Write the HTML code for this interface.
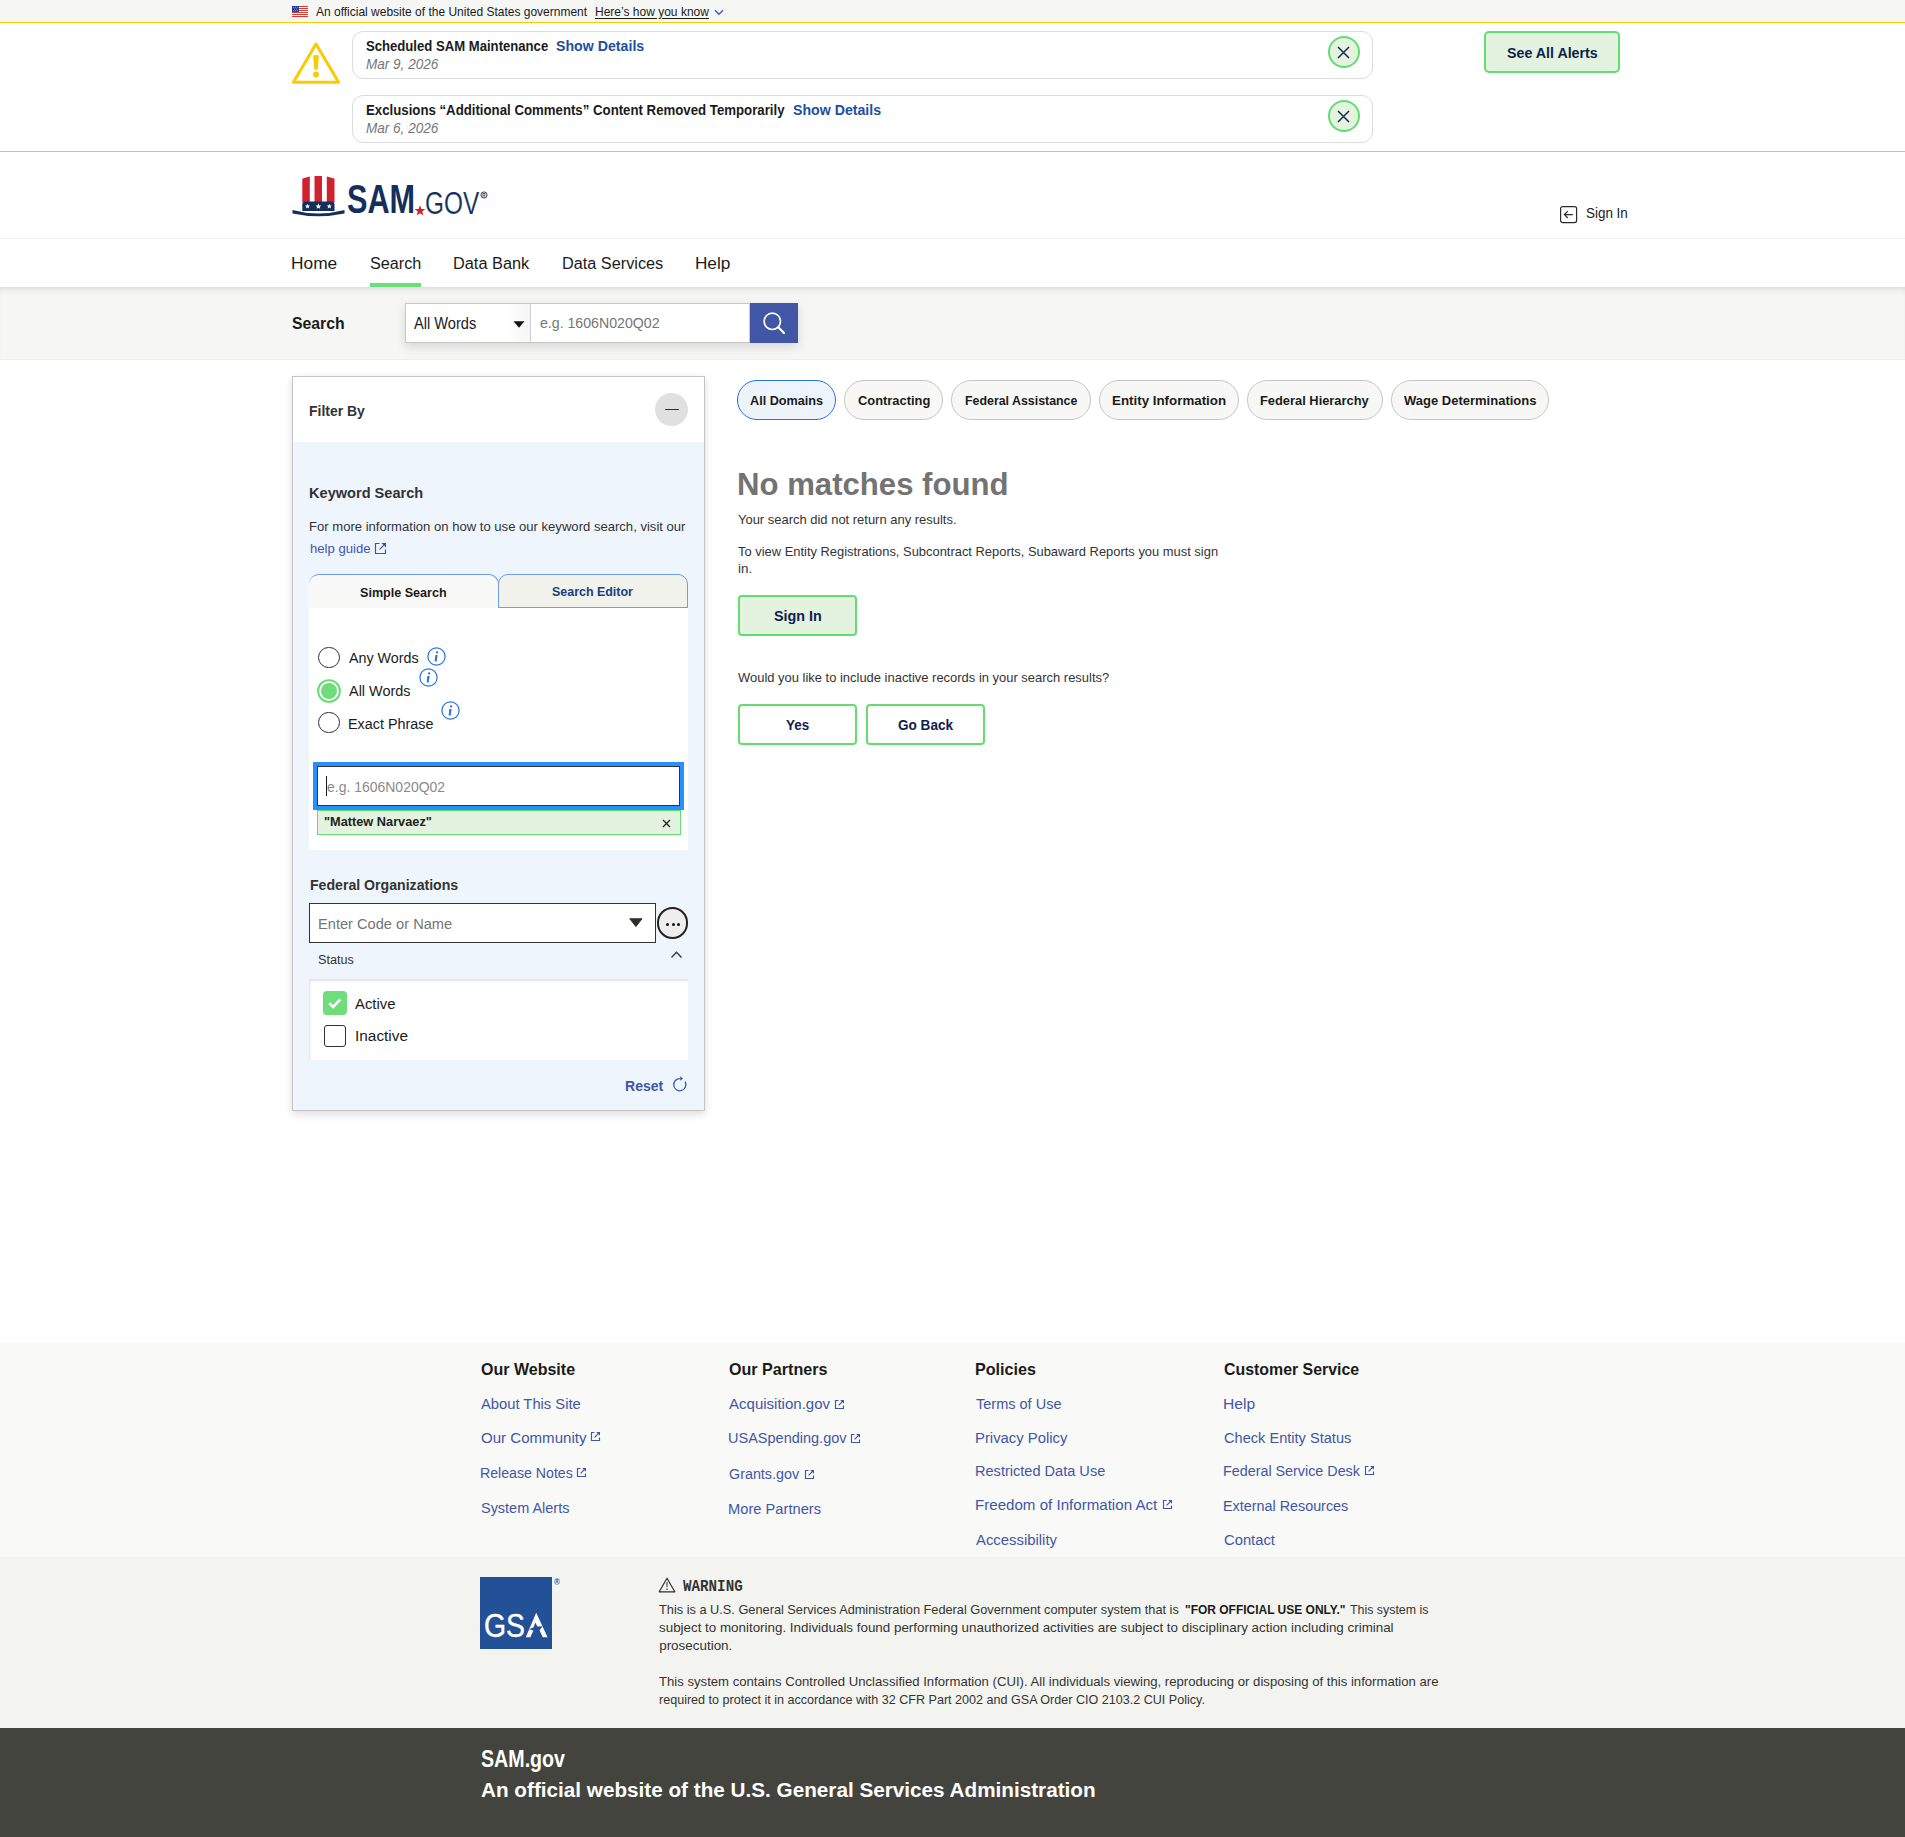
<!DOCTYPE html>
<html><head><meta charset="utf-8"><title>SAM.gov Search</title>
<style>
html,body{margin:0;padding:0;}
body{width:1905px;height:1837px;position:relative;overflow:hidden;background:#fff;font-family:'Liberation Sans', sans-serif;}
</style></head><body>
<div style="position:absolute;left:0px;top:0px;width:1905px;height:22px;background:#f6f6f4"></div><div style="position:absolute;left:0px;top:22px;width:1905px;height:1px;background:#f9cb00"></div><svg style="position:absolute;left:292px;top:6px" width="16" height="11" viewBox="0 0 16 11">
<rect width="16" height="11" fill="#fff"/>
<g fill="#d83933"><rect y="0" width="16" height="1"/><rect y="2" width="16" height="1"/><rect y="4" width="16" height="1"/><rect y="6" width="16" height="1"/><rect y="8" width="16" height="1"/><rect y="10" width="16" height="1"/></g>
<rect width="7" height="6" fill="#1e3a9f"/>
<g fill="#fff"><circle cx="1.5" cy="1.3" r=".45"/><circle cx="3.5" cy="1.3" r=".45"/><circle cx="5.5" cy="1.3" r=".45"/><circle cx="2.5" cy="3" r=".45"/><circle cx="4.5" cy="3" r=".45"/><circle cx="1.5" cy="4.7" r=".45"/><circle cx="3.5" cy="4.7" r=".45"/><circle cx="5.5" cy="4.7" r=".45"/></g>
</svg><svg style="position:absolute;left:714px;top:9px" width="10" height="7" viewBox="0 0 10 7"><path d="M1 1.2 L5 5.2 L9 1.2" fill="none" stroke="#2f5fc9" stroke-width="1.4"/></svg><div style="position:absolute;left:0px;top:151px;width:1905px;height:1px;background:#f9cb00"></div><svg style="position:absolute;left:291px;top:41px" width="50" height="44" viewBox="0 0 50 44">
<path d="M25 3.0 L47.6 41.2 L2.4 41.2 Z" fill="none" stroke="#f9cb00" stroke-width="3.0" stroke-linejoin="round"/>
<path d="M22.1 14.6 Q25 13.2 27.9 14.6 L26.7 28.4 Q25 29.2 23.3 28.4 Z" fill="#f9cb00"/>
<circle cx="25" cy="33.5" r="3" fill="#f9cb00"/>
</svg><div style="position:absolute;left:352px;top:31px;width:1019px;height:46px;border:1px solid #dcdcdc;border-radius:11px;background:#fff"></div><div style="position:absolute;left:1327.5px;top:35.5px;width:28px;height:28px;border:2px solid #63dd70;border-radius:50%;background:#e3f3df"></div><svg style="position:absolute;left:1336px;top:44.5px" width="15" height="15" viewBox="0 0 15 15"><path d="M2 2 L13 13 M13 2 L2 13" stroke="#1a2b52" stroke-width="1.5"/></svg><div style="position:absolute;left:352px;top:95px;width:1019px;height:46px;border:1px solid #dcdcdc;border-radius:11px;background:#fff"></div><div style="position:absolute;left:1327.5px;top:99.5px;width:28px;height:28px;border:2px solid #63dd70;border-radius:50%;background:#e3f3df"></div><svg style="position:absolute;left:1336px;top:108.5px" width="15" height="15" viewBox="0 0 15 15"><path d="M2 2 L13 13 M13 2 L2 13" stroke="#1a2b52" stroke-width="1.5"/></svg><div style="position:absolute;left:1484px;top:31px;width:132px;height:38px;border:2px solid #63dd70;border-radius:5px;background:#e3f3df"></div><svg style="position:absolute;left:292px;top:175px" width="197" height="42" viewBox="0 0 197 42">
<path d="M10.3 3.8 Q14 2.3 17.8 1.6 L17.8 27.5 L10.3 27.5 Z" fill="#d0222e"/>
<path d="M22.5 1 L30 1 L30 27.5 L22.5 27.5 Z" fill="#d0222e"/>
<path d="M34.8 1.6 Q38.6 2.3 42.5 3.8 L42.5 27.5 L34.8 27.5 Z" fill="#d0222e"/>
<path d="M10.3 29.5 Q10.3 26.5 14 26.5 L38.8 26.5 Q42.5 26.5 42.5 29.5 L42.5 36 L10.3 36 Z" fill="#14305a"/>
<g fill="#fff"><path d="M15.5 28.8 l.75 1.6 1.75.2 -1.3 1.15 .35 1.7 -1.55 -.85 -1.55 .85 .35 -1.7 -1.3 -1.15 1.75 -.2z"/>
<path d="M26.4 28.6 l.85 1.8 1.95.22 -1.45 1.3 .4 1.9 -1.75 -.95 -1.75 .95 .4 -1.9 -1.45 -1.3 1.95 -.22z"/>
<path d="M37.3 28.8 l.75 1.6 1.75.2 -1.3 1.15 .35 1.7 -1.55 -.85 -1.55 .85 .35 -1.7 -1.3 -1.15 1.75 -.2z"/></g>
<path d="M0.5 35 Q26 42 52.5 35 L52.5 38.5 Q26 44 0.5 38.5 Z" fill="#14305a"/>
</svg><svg style="position:absolute;left:414px;top:205px" width="12" height="11" viewBox="0 0 12 11"><path d="M6 0.3 L7.4 4 L11.4 4.1 L8.2 6.6 L9.4 10.6 L6 8.3 L2.6 10.6 L3.8 6.6 L0.6 4.1 L4.6 4 Z" fill="#d0222e"/></svg><svg style="position:absolute;left:479.5px;top:191px" width="8" height="8" viewBox="0 0 8 8"><circle cx="4" cy="4" r="3.1" fill="none" stroke="#14305a" stroke-width=".9"/><text x="4" y="5.6" font-size="4.6" text-anchor="middle" fill="#14305a" font-family="Liberation Sans" font-weight="700">R</text></svg><svg style="position:absolute;left:1559px;top:205px" width="20" height="19" viewBox="0 0 20 19"><rect x="1.6" y="1.6" width="16" height="16" rx="2" fill="none" stroke="#2b2b2b" stroke-width="1.2"/><path d="M13.8 9.6 L5.5 9.6 M8.8 6.2 L5.4 9.6 L8.8 13" fill="none" stroke="#2b2b2b" stroke-width="1.2"/></svg><div style="position:absolute;left:0px;top:238px;width:1905px;height:1px;background:#efefea"></div><div style="position:absolute;left:370px;top:283px;width:51px;height:4px;background:#6bde77"></div><div style="position:absolute;left:0px;top:287px;width:1905px;height:72px;background:#f6f6f4;box-shadow:inset 0 6px 8px -6px rgba(0,0,0,.18)"></div><div style="position:absolute;left:0px;top:359px;width:1905px;height:1px;background:#efefea"></div><div style="position:absolute;left:405px;top:303px;width:393px;height:40px;box-shadow:0 4px 10px rgba(0,0,0,.13)"></div><div style="position:absolute;left:405px;top:303px;width:125px;height:38px;border:1px solid #c8c8c8;background:#fff"></div><div style="position:absolute;left:505px;top:304px;width:25px;height:38px;background:linear-gradient(90deg,rgba(0,0,0,0),rgba(0,0,0,.035))"></div><svg style="position:absolute;left:513px;top:321px" width="12" height="7" viewBox="0 0 12 7"><path d="M0.5 0.3 L11.5 0.3 L6 6.8 Z" fill="#111"/></svg><div style="position:absolute;left:531px;top:303px;width:218px;height:38px;border:1px solid #c8c8c8;border-left:none;background:#fff"></div><div style="position:absolute;left:530px;top:304px;width:1px;height:38px;background:#d0d0d0"></div><div style="position:absolute;left:750px;top:303px;width:48px;height:40px;background:#4157a6"></div><svg style="position:absolute;left:760px;top:309px" width="28" height="28" viewBox="0 0 28 28"><circle cx="12.3" cy="12.3" r="8.2" fill="none" stroke="#fff" stroke-width="1.7"/><path d="M18.3 18.3 L24 24" stroke="#fff" stroke-width="2.2" stroke-linecap="round"/></svg><div style="position:absolute;left:292px;top:376px;width:411px;height:733px;border:1px solid #c4c4c4;background:#eef5fc;box-shadow:0 3px 8px rgba(0,0,0,.14)"></div><div style="position:absolute;left:293px;top:377px;width:411px;height:65px;background:#fff"></div><div style="position:absolute;left:655px;top:393px;width:33px;height:33px;border-radius:50%;background:#e0e0e0"></div><div style="position:absolute;left:665px;top:408.7px;width:14px;height:1.7px;background:#0e3570;border-radius:1px"></div><svg style="position:absolute;left:374px;top:542px" width="14" height="13" viewBox="0 0 14 13"><path d="M5.5 1.5 L1.5 1.5 L1.5 11.5 L11.5 11.5 L11.5 7.5" fill="none" stroke="#3f51b5" stroke-width="1.2"/><path d="M5.6 7.4 L11.2 1.8" fill="none" stroke="#3f51b5" stroke-width="1.2"/><path d="M7.4 1 L12 1 L12 5.6 Z" fill="#3f51b5"/></svg><div style="position:absolute;left:309px;top:574px;width:189px;height:34px;border-top:1px solid #6f9de9;border-right:1px solid #6f9de9;border-radius:10px 10px 0 0;background:#f8f8f6"></div><div style="position:absolute;left:498px;top:574px;width:188px;height:33px;border:1px solid #6f9de9;border-radius:10px 10px 0 0;background:#f1f2ec"></div><div style="position:absolute;left:309px;top:608px;width:379px;height:242px;background:#fff"></div><div style="position:absolute;left:309.5px;top:606px;width:188px;height:2px;background:#f8f8f6"></div><div style="position:absolute;left:498px;top:607px;width:190px;height:1px;background:#6f9de9"></div><div style="position:absolute;left:318px;top:646.8px;width:19.5px;height:19.5px;border:1.4px solid #2d2d2d;border-radius:50%;background:#fff"></div><svg style="position:absolute;left:426.5px;top:646.5px" width="19" height="19" viewBox="0 0 19 19"><circle cx="9.5" cy="9.5" r="8.6" fill="none" stroke="#2672de" stroke-width="1.2"/><path d="M8.3 8 L10.6 8 L9.6 14.4 L7.7 14.4 Z" fill="#2672de"/><circle cx="10.1" cy="5.4" r="1.15" fill="#2672de"/></svg><svg style="position:absolute;left:317px;top:678.8px" width="24" height="24" viewBox="0 0 24 24"><circle cx="12" cy="12" r="10.9" fill="#fff" stroke="#63dd70" stroke-width="1.9"/><circle cx="12" cy="12" r="8" fill="#70dd7b"/></svg><svg style="position:absolute;left:418.5px;top:667.5px" width="19" height="19" viewBox="0 0 19 19"><circle cx="9.5" cy="9.5" r="8.6" fill="none" stroke="#2672de" stroke-width="1.2"/><path d="M8.3 8 L10.6 8 L9.6 14.4 L7.7 14.4 Z" fill="#2672de"/><circle cx="10.1" cy="5.4" r="1.15" fill="#2672de"/></svg><div style="position:absolute;left:318px;top:711.7px;width:19.5px;height:19.5px;border:1.4px solid #2d2d2d;border-radius:50%;background:#fff"></div><svg style="position:absolute;left:440.5px;top:700.5px" width="19" height="19" viewBox="0 0 19 19"><circle cx="9.5" cy="9.5" r="8.6" fill="none" stroke="#2672de" stroke-width="1.2"/><path d="M8.3 8 L10.6 8 L9.6 14.4 L7.7 14.4 Z" fill="#2672de"/><circle cx="10.1" cy="5.4" r="1.15" fill="#2672de"/></svg><div style="position:absolute;left:313px;top:762px;width:371px;height:48px;background:#2491ff"></div><div style="position:absolute;left:317px;top:766px;width:361px;height:38px;border:1px solid #333;background:#fff"></div><div style="position:absolute;left:325.6px;top:776px;width:1.3px;height:20px;background:#1b1b1b"></div><div style="position:absolute;left:317px;top:810px;width:361.5px;height:22.5px;border:1px solid #63dd70;background:#e3f3df"></div><svg style="position:absolute;left:662px;top:818.5px" width="9" height="9" viewBox="0 0 9 9"><path d="M1 1 L8 8 M8 1 L1 8" stroke="#222" stroke-width="1.3"/></svg><div style="position:absolute;left:309px;top:903px;width:345px;height:38px;border:1.3px solid #333;background:#fff"></div><svg style="position:absolute;left:629px;top:918px" width="14" height="10" viewBox="0 0 14 10"><path d="M0.8 0.8 L13 0.8 L6.9 8.5 Z" fill="#2e2e2a" stroke="#2e2e2a" stroke-width="1" stroke-linejoin="round"/></svg><div style="position:absolute;left:656.5px;top:907px;width:27.5px;height:27.5px;border:2px solid #222;border-radius:50%;background:#eee"></div><div style="position:absolute;left:665.8px;top:922.7px;width:3.0px;height:3.0px;border-radius:50%;background:#111"></div><div style="position:absolute;left:671.6px;top:922.7px;width:3.0px;height:3.0px;border-radius:50%;background:#111"></div><div style="position:absolute;left:677.4px;top:922.7px;width:3.0px;height:3.0px;border-radius:50%;background:#111"></div><svg style="position:absolute;left:670px;top:950px" width="13" height="9" viewBox="0 0 13 9"><path d="M1.5 7.5 L6.5 2.3 L11.5 7.5" fill="none" stroke="#333" stroke-width="1.3"/></svg><div style="position:absolute;left:309px;top:979px;width:379px;height:81px;background:#fff;box-shadow:inset 1px 2px 2px rgba(0,0,0,.12)"></div><div style="position:absolute;left:323px;top:991px;width:24px;height:24px;border-radius:4px;background:#70dd7b"></div><svg style="position:absolute;left:323px;top:991px" width="24" height="24" viewBox="0 0 24 24"><path d="M6.3 12.2 L10.2 16 L17.3 8.4" fill="none" stroke="#fff" stroke-width="2.6"/></svg><div style="position:absolute;left:324px;top:1025px;width:19.5px;height:19.5px;border:1.5px solid #333;border-radius:3px;background:#fff"></div><svg style="position:absolute;left:671px;top:1075px" width="18" height="18" viewBox="0 0 18 18"><path d="M8.8 3.6 A6.1 6.1 0 1 0 14.08 6.65" fill="none" stroke="#3b58b0" stroke-width="1.3"/><path d="M9.2 1.2 L9.2 5.8 L12.1 3.5 Z" fill="#3b58b0"/></svg><div style="position:absolute;left:737px;top:380px;width:97px;height:38px;border:1px solid #2672de;border-radius:20px;background:#edf4fb"></div><div style="position:absolute;left:844px;top:380px;width:97px;height:38px;border:1px solid #c6c6c6;border-radius:20px;background:#f7f7f5"></div><div style="position:absolute;left:951px;top:380px;width:137.5px;height:38px;border:1px solid #c6c6c6;border-radius:20px;background:#f7f7f5"></div><div style="position:absolute;left:1099px;top:380px;width:137.5px;height:38px;border:1px solid #c6c6c6;border-radius:20px;background:#f7f7f5"></div><div style="position:absolute;left:1247px;top:380px;width:134px;height:38px;border:1px solid #c6c6c6;border-radius:20px;background:#f7f7f5"></div><div style="position:absolute;left:1391px;top:380px;width:155.70000000000005px;height:38px;border:1px solid #c6c6c6;border-radius:20px;background:#f7f7f5"></div><div style="position:absolute;left:737.5px;top:594.5px;width:115.5px;height:37.5px;border:2px solid #63dd70;border-radius:4px;background:#e3f3df"></div><div style="position:absolute;left:737.5px;top:703.5px;width:115.5px;height:37px;border:2px solid #63dd70;border-radius:4px;background:#fff"></div><div style="position:absolute;left:865.5px;top:703.5px;width:115.5px;height:37px;border:2px solid #63dd70;border-radius:4px;background:#fff"></div><div style="position:absolute;left:0px;top:1343px;width:1905px;height:214px;background:#f9f9f7"></div><div style="position:absolute;left:0px;top:1557px;width:1905px;height:171px;background:#f3f4ef"></div><div style="position:absolute;left:0px;top:1728px;width:1905px;height:109px;background:#44443e"></div><svg style="position:absolute;left:590px;top:1431px" width="11" height="11" viewBox="0 0 11 11"><path d="M4.5 1.5 L1.5 1.5 L1.5 9.5 L9.5 9.5 L9.5 6.5" fill="none" stroke="#3f57a6" stroke-width="1.15"/><path d="M4.6 6.4 L9.3 1.7" fill="none" stroke="#3f57a6" stroke-width="1.15"/><path d="M6.2 1 L10 1 L10 4.8 Z" fill="#3f57a6"/></svg><svg style="position:absolute;left:576px;top:1467px" width="11" height="11" viewBox="0 0 11 11"><path d="M4.5 1.5 L1.5 1.5 L1.5 9.5 L9.5 9.5 L9.5 6.5" fill="none" stroke="#3f57a6" stroke-width="1.15"/><path d="M4.6 6.4 L9.3 1.7" fill="none" stroke="#3f57a6" stroke-width="1.15"/><path d="M6.2 1 L10 1 L10 4.8 Z" fill="#3f57a6"/></svg><svg style="position:absolute;left:834px;top:1399px" width="11" height="11" viewBox="0 0 11 11"><path d="M4.5 1.5 L1.5 1.5 L1.5 9.5 L9.5 9.5 L9.5 6.5" fill="none" stroke="#3f57a6" stroke-width="1.15"/><path d="M4.6 6.4 L9.3 1.7" fill="none" stroke="#3f57a6" stroke-width="1.15"/><path d="M6.2 1 L10 1 L10 4.8 Z" fill="#3f57a6"/></svg><svg style="position:absolute;left:850px;top:1433px" width="11" height="11" viewBox="0 0 11 11"><path d="M4.5 1.5 L1.5 1.5 L1.5 9.5 L9.5 9.5 L9.5 6.5" fill="none" stroke="#3f57a6" stroke-width="1.15"/><path d="M4.6 6.4 L9.3 1.7" fill="none" stroke="#3f57a6" stroke-width="1.15"/><path d="M6.2 1 L10 1 L10 4.8 Z" fill="#3f57a6"/></svg><svg style="position:absolute;left:804px;top:1469px" width="11" height="11" viewBox="0 0 11 11"><path d="M4.5 1.5 L1.5 1.5 L1.5 9.5 L9.5 9.5 L9.5 6.5" fill="none" stroke="#3f57a6" stroke-width="1.15"/><path d="M4.6 6.4 L9.3 1.7" fill="none" stroke="#3f57a6" stroke-width="1.15"/><path d="M6.2 1 L10 1 L10 4.8 Z" fill="#3f57a6"/></svg><svg style="position:absolute;left:1162px;top:1499px" width="11" height="11" viewBox="0 0 11 11"><path d="M4.5 1.5 L1.5 1.5 L1.5 9.5 L9.5 9.5 L9.5 6.5" fill="none" stroke="#3f57a6" stroke-width="1.15"/><path d="M4.6 6.4 L9.3 1.7" fill="none" stroke="#3f57a6" stroke-width="1.15"/><path d="M6.2 1 L10 1 L10 4.8 Z" fill="#3f57a6"/></svg><svg style="position:absolute;left:1364px;top:1465px" width="11" height="11" viewBox="0 0 11 11"><path d="M4.5 1.5 L1.5 1.5 L1.5 9.5 L9.5 9.5 L9.5 6.5" fill="none" stroke="#3f57a6" stroke-width="1.15"/><path d="M4.6 6.4 L9.3 1.7" fill="none" stroke="#3f57a6" stroke-width="1.15"/><path d="M6.2 1 L10 1 L10 4.8 Z" fill="#3f57a6"/></svg><div style="position:absolute;left:480px;top:1577px;width:72px;height:72px;background:#235197"></div><svg style="position:absolute;left:525px;top:1612px" width="24" height="26" viewBox="0 0 24 26"><path d="M11.2 0.8 L22.6 25.2 L17.8 25.2 L14.6 18.4 L17.4 14.2 L12.4 14.6 L10.2 10.4 L8.6 15.2 L4.2 17.2 L8.4 18.6 L5.4 25.2 L0.8 25.2 Z" fill="#fff"/></svg><svg style="position:absolute;left:658px;top:1577px" width="18" height="16" viewBox="0 0 18 16"><path d="M9 1.2 L16.8 14.8 L1.2 14.8 Z" fill="none" stroke="#2e2e2e" stroke-width="1.2" stroke-linejoin="round"/><path d="M8.4 5.2 L9.6 5.2 L9.4 10.2 L8.6 10.2 Z" fill="#2e2e2e"/><circle cx="9" cy="12.2" r=".8" fill="#2e2e2e"/></svg>
<div style="position:absolute;left:316.20px;top:2.70px;white-space:nowrap;font:400 13.43px 'Liberation Sans', sans-serif;line-height:17px;color:#1b1b1b;transform:scaleX(0.8934);transform-origin:0 0;">An official website of the United States government</div><div style="position:absolute;left:594.81px;top:2.70px;white-space:nowrap;font:400 13.43px 'Liberation Sans', sans-serif;line-height:17px;color:#1b1b1b;transform:scaleX(0.8947);transform-origin:0 0;text-decoration:underline;text-underline-offset:1.5px;">Here’s how you know</div><div style="position:absolute;left:365.50px;top:36.80px;white-space:nowrap;font:700 14.38px 'Liberation Sans', sans-serif;line-height:18px;color:#1b1b1b;transform:scaleX(0.9124);transform-origin:0 0;">Scheduled SAM Maintenance</div><div style="position:absolute;left:556.30px;top:36.80px;white-space:nowrap;font:700 14.38px 'Liberation Sans', sans-serif;line-height:18px;color:#1d4f9f;transform:scaleX(0.9858);transform-origin:0 0;">Show Details</div><div style="position:absolute;left:366.00px;top:53.70px;white-space:nowrap;font:italic 400 15.34px 'Liberation Sans', sans-serif;line-height:19px;color:#71767a;transform:scaleX(0.8836);transform-origin:0 0;">Mar 9, 2026</div><div style="position:absolute;left:365.50px;top:100.80px;white-space:nowrap;font:700 14.38px 'Liberation Sans', sans-serif;line-height:18px;color:#1b1b1b;transform:scaleX(0.9198);transform-origin:0 0;">Exclusions “Additional Comments” Content Removed Temporarily</div><div style="position:absolute;left:792.60px;top:100.80px;white-space:nowrap;font:700 14.38px 'Liberation Sans', sans-serif;line-height:18px;color:#1d4f9f;transform:scaleX(0.9847);transform-origin:0 0;">Show Details</div><div style="position:absolute;left:366.00px;top:117.70px;white-space:nowrap;font:italic 400 15.34px 'Liberation Sans', sans-serif;line-height:19px;color:#71767a;transform:scaleX(0.8836);transform-origin:0 0;">Mar 6, 2026</div><div style="position:absolute;left:1506.80px;top:42.70px;white-space:nowrap;font:700 15.34px 'Liberation Sans', sans-serif;line-height:19px;color:#0f1f4c;transform:scaleX(0.9288);transform-origin:0 0;">See All Alerts</div><div style="position:absolute;left:347.03px;top:174.00px;white-space:nowrap;font:700 40px 'Liberation Sans', sans-serif;line-height:50px;color:#14305a;transform:scaleX(0.7667);transform-origin:0 0;">SAM</div><div style="position:absolute;left:424.84px;top:182.50px;white-space:nowrap;font:400 32px 'Liberation Sans', sans-serif;line-height:40px;color:#14305a;transform:scaleX(0.7629);transform-origin:0 0;-webkit-text-stroke:0.15px #fff">GOV</div><div style="position:absolute;left:1586.00px;top:202.60px;white-space:nowrap;font:400 15.34px 'Liberation Sans', sans-serif;line-height:19px;color:#1b1b1b;transform:scaleX(0.8751);transform-origin:0 0;">Sign In</div><div style="position:absolute;left:291.40px;top:251.80px;white-space:nowrap;font:400 17.26px 'Liberation Sans', sans-serif;line-height:22px;color:#1b1b1b;transform:scaleX(1.0040);transform-origin:0 0;">Home</div><div style="position:absolute;left:370.00px;top:251.80px;white-space:nowrap;font:400 17.26px 'Liberation Sans', sans-serif;line-height:22px;color:#1b1b1b;transform:scaleX(0.9378);transform-origin:0 0;">Search</div><div style="position:absolute;left:453.25px;top:251.80px;white-space:nowrap;font:400 17.26px 'Liberation Sans', sans-serif;line-height:22px;color:#1b1b1b;transform:scaleX(0.9459);transform-origin:0 0;">Data Bank</div><div style="position:absolute;left:562.16px;top:251.80px;white-space:nowrap;font:400 17.26px 'Liberation Sans', sans-serif;line-height:22px;color:#1b1b1b;transform:scaleX(0.9428);transform-origin:0 0;">Data Services</div><div style="position:absolute;left:694.90px;top:251.80px;white-space:nowrap;font:400 17.26px 'Liberation Sans', sans-serif;line-height:22px;color:#1b1b1b;">Help</div><div style="position:absolute;left:292.40px;top:311.70px;white-space:nowrap;font:700 17.26px 'Liberation Sans', sans-serif;line-height:22px;color:#1b1b1b;transform:scaleX(0.9158);transform-origin:0 0;">Search</div><div style="position:absolute;left:414.00px;top:313.90px;white-space:nowrap;font:400 15.82px 'Liberation Sans', sans-serif;line-height:20px;color:#1b1b1b;transform:scaleX(0.9250);transform-origin:0 0;">All Words</div><div style="position:absolute;left:540.30px;top:313.30px;white-space:nowrap;font:400 15.34px 'Liberation Sans', sans-serif;line-height:19px;color:#757575;transform:scaleX(0.9224);transform-origin:0 0;">e.g. 1606N020Q02</div><div style="position:absolute;left:308.89px;top:401.00px;white-space:nowrap;font:700 15.34px 'Liberation Sans', sans-serif;line-height:19px;color:#333;transform:scaleX(0.9111);transform-origin:0 0;">Filter By</div><div style="position:absolute;left:308.75px;top:482.60px;white-space:nowrap;font:700 15.34px 'Liberation Sans', sans-serif;line-height:19px;color:#333;transform:scaleX(0.9507);transform-origin:0 0;">Keyword Search</div><div style="position:absolute;left:308.73px;top:517.60px;white-space:nowrap;font:400 13.43px 'Liberation Sans', sans-serif;line-height:17px;color:#333;transform:scaleX(0.9742);transform-origin:0 0;">For more information on how to use our keyword search, visit our</div><div style="position:absolute;left:309.70px;top:539.70px;white-space:nowrap;font:400 13.43px 'Liberation Sans', sans-serif;line-height:17px;color:#4553b0;transform:scaleX(0.9775);transform-origin:0 0;">help guide</div><div style="position:absolute;left:360.00px;top:583.80px;white-space:nowrap;font:700 13.43px 'Liberation Sans', sans-serif;line-height:17px;color:#1b1b1b;transform:scaleX(0.9371);transform-origin:0 0;">Simple Search</div><div style="position:absolute;left:552.30px;top:582.90px;white-space:nowrap;font:700 13.43px 'Liberation Sans', sans-serif;line-height:17px;color:#173f80;transform:scaleX(0.9268);transform-origin:0 0;">Search Editor</div><div style="position:absolute;left:349.00px;top:647.70px;white-space:nowrap;font:400 15.34px 'Liberation Sans', sans-serif;line-height:19px;color:#1b1b1b;transform:scaleX(0.9331);transform-origin:0 0;">Any Words</div><div style="position:absolute;left:349.00px;top:680.60px;white-space:nowrap;font:400 15.34px 'Liberation Sans', sans-serif;line-height:19px;color:#1b1b1b;transform:scaleX(0.9415);transform-origin:0 0;">All Words</div><div style="position:absolute;left:348.06px;top:713.60px;white-space:nowrap;font:400 15.34px 'Liberation Sans', sans-serif;line-height:19px;color:#1b1b1b;transform:scaleX(0.9371);transform-origin:0 0;">Exact Phrase</div><div style="position:absolute;left:327.30px;top:776.60px;white-space:nowrap;font:400 15.34px 'Liberation Sans', sans-serif;line-height:19px;color:#8a8a8a;transform:scaleX(0.9115);transform-origin:0 0;">e.g. 1606N020Q02</div><div style="position:absolute;left:323.50px;top:814.40px;white-space:nowrap;font:700 12.47px 'Liberation Sans', sans-serif;line-height:16px;color:#222;transform:scaleX(1.0231);transform-origin:0 0;">&quot;Mattew Narvaez&quot;</div><div style="position:absolute;left:309.70px;top:875.80px;white-space:nowrap;font:700 14.38px 'Liberation Sans', sans-serif;line-height:18px;color:#333;transform:scaleX(0.9816);transform-origin:0 0;">Federal Organizations</div><div style="position:absolute;left:317.95px;top:913.80px;white-space:nowrap;font:400 15.34px 'Liberation Sans', sans-serif;line-height:19px;color:#757575;transform:scaleX(0.9543);transform-origin:0 0;">Enter Code or Name</div><div style="position:absolute;left:317.60px;top:951.70px;white-space:nowrap;font:400 12.47px 'Liberation Sans', sans-serif;line-height:16px;color:#333;transform:scaleX(1.0110);transform-origin:0 0;">Status</div><div style="position:absolute;left:355.00px;top:994.00px;white-space:nowrap;font:400 15.34px 'Liberation Sans', sans-serif;line-height:19px;color:#1b1b1b;transform:scaleX(0.9705);transform-origin:0 0;">Active</div><div style="position:absolute;left:354.50px;top:1025.80px;white-space:nowrap;font:400 15.34px 'Liberation Sans', sans-serif;line-height:19px;color:#1b1b1b;transform:scaleX(1.0039);transform-origin:0 0;">Inactive</div><div style="position:absolute;left:624.58px;top:1075.90px;white-space:nowrap;font:700 15.34px 'Liberation Sans', sans-serif;line-height:19px;color:#3f57a6;transform:scaleX(0.9153);transform-origin:0 0;">Reset</div><div style="position:absolute;left:750.30px;top:391.80px;white-space:nowrap;font:700 13.43px 'Liberation Sans', sans-serif;line-height:17px;color:#1b1b1b;transform:scaleX(0.9430);transform-origin:0 0;">All Domains</div><div style="position:absolute;left:857.70px;top:391.80px;white-space:nowrap;font:700 13.43px 'Liberation Sans', sans-serif;line-height:17px;color:#1b1b1b;transform:scaleX(0.9599);transform-origin:0 0;">Contracting</div><div style="position:absolute;left:964.60px;top:391.80px;white-space:nowrap;font:700 13.43px 'Liberation Sans', sans-serif;line-height:17px;color:#1b1b1b;transform:scaleX(0.9222);transform-origin:0 0;">Federal Assistance</div><div style="position:absolute;left:1111.80px;top:391.80px;white-space:nowrap;font:700 13.43px 'Liberation Sans', sans-serif;line-height:17px;color:#1b1b1b;transform:scaleX(0.9936);transform-origin:0 0;">Entity Information</div><div style="position:absolute;left:1260.30px;top:391.80px;white-space:nowrap;font:700 13.43px 'Liberation Sans', sans-serif;line-height:17px;color:#1b1b1b;transform:scaleX(0.9585);transform-origin:0 0;">Federal Hierarchy</div><div style="position:absolute;left:1403.60px;top:391.80px;white-space:nowrap;font:700 13.43px 'Liberation Sans', sans-serif;line-height:17px;color:#1b1b1b;transform:scaleX(0.9687);transform-origin:0 0;">Wage Determinations</div><div style="position:absolute;left:736.67px;top:466.00px;white-space:nowrap;font:700 30.69px 'Liberation Sans', sans-serif;line-height:38px;color:#737373;transform:scaleX(1.0143);transform-origin:0 0;">No matches found</div><div style="position:absolute;left:737.80px;top:510.80px;white-space:nowrap;font:400 13.43px 'Liberation Sans', sans-serif;line-height:17px;color:#333;transform:scaleX(0.9655);transform-origin:0 0;">Your search did not return any results.</div><div style="position:absolute;left:737.80px;top:542.70px;white-space:nowrap;font:400 13.43px 'Liberation Sans', sans-serif;line-height:17px;color:#333;transform:scaleX(0.9619);transform-origin:0 0;">To view Entity Registrations, Subcontract Reports, Subaward Reports you must sign</div><div style="position:absolute;left:738.00px;top:560.40px;white-space:nowrap;font:400 13.43px 'Liberation Sans', sans-serif;line-height:17px;color:#333;">in.</div><div style="position:absolute;left:773.70px;top:606.20px;white-space:nowrap;font:700 15.34px 'Liberation Sans', sans-serif;line-height:19px;color:#102050;transform:scaleX(0.9364);transform-origin:0 0;">Sign In</div><div style="position:absolute;left:737.80px;top:668.80px;white-space:nowrap;font:400 13.43px 'Liberation Sans', sans-serif;line-height:17px;color:#333;transform:scaleX(0.9648);transform-origin:0 0;">Would you like to include inactive records in your search results?</div><div style="position:absolute;left:786.20px;top:714.70px;white-space:nowrap;font:700 15.34px 'Liberation Sans', sans-serif;line-height:19px;color:#102050;transform:scaleX(0.8764);transform-origin:0 0;">Yes</div><div style="position:absolute;left:897.60px;top:714.70px;white-space:nowrap;font:700 15.34px 'Liberation Sans', sans-serif;line-height:19px;color:#102050;transform:scaleX(0.8857);transform-origin:0 0;">Go Back</div><div style="position:absolute;left:480.50px;top:1358.00px;white-space:nowrap;font:700 17.26px 'Liberation Sans', sans-serif;line-height:22px;color:#1b1b1b;transform:scaleX(0.9286);transform-origin:0 0;">Our Website</div><div style="position:absolute;left:480.50px;top:1393.70px;white-space:nowrap;font:400 15.34px 'Liberation Sans', sans-serif;line-height:19px;color:#3f57a6;transform:scaleX(0.9621);transform-origin:0 0;">About This Site</div><div style="position:absolute;left:480.50px;top:1427.60px;white-space:nowrap;font:400 15.34px 'Liberation Sans', sans-serif;line-height:19px;color:#3f57a6;transform:scaleX(0.9828);transform-origin:0 0;">Our Community</div><div style="position:absolute;left:479.58px;top:1462.70px;white-space:nowrap;font:400 15.34px 'Liberation Sans', sans-serif;line-height:19px;color:#3f57a6;transform:scaleX(0.9232);transform-origin:0 0;">Release Notes</div><div style="position:absolute;left:480.50px;top:1497.90px;white-space:nowrap;font:400 15.34px 'Liberation Sans', sans-serif;line-height:19px;color:#3f57a6;transform:scaleX(0.9433);transform-origin:0 0;">System Alerts</div><div style="position:absolute;left:728.60px;top:1358.00px;white-space:nowrap;font:700 17.26px 'Liberation Sans', sans-serif;line-height:22px;color:#1b1b1b;transform:scaleX(0.9336);transform-origin:0 0;">Our Partners</div><div style="position:absolute;left:728.60px;top:1393.80px;white-space:nowrap;font:400 15.34px 'Liberation Sans', sans-serif;line-height:19px;color:#3f57a6;transform:scaleX(0.9803);transform-origin:0 0;">Acquisition.gov</div><div style="position:absolute;left:727.65px;top:1428.40px;white-space:nowrap;font:400 15.34px 'Liberation Sans', sans-serif;line-height:19px;color:#3f57a6;transform:scaleX(0.9462);transform-origin:0 0;">USASpending.gov</div><div style="position:absolute;left:728.60px;top:1463.60px;white-space:nowrap;font:400 15.34px 'Liberation Sans', sans-serif;line-height:19px;color:#3f57a6;transform:scaleX(0.9348);transform-origin:0 0;">Grants.gov</div><div style="position:absolute;left:727.64px;top:1498.80px;white-space:nowrap;font:400 15.34px 'Liberation Sans', sans-serif;line-height:19px;color:#3f57a6;transform:scaleX(0.9580);transform-origin:0 0;">More Partners</div><div style="position:absolute;left:975.26px;top:1358.00px;white-space:nowrap;font:700 17.26px 'Liberation Sans', sans-serif;line-height:22px;color:#1b1b1b;transform:scaleX(0.9354);transform-origin:0 0;">Policies</div><div style="position:absolute;left:976.20px;top:1393.90px;white-space:nowrap;font:400 15.34px 'Liberation Sans', sans-serif;line-height:19px;color:#3f57a6;transform:scaleX(0.9470);transform-origin:0 0;">Terms of Use</div><div style="position:absolute;left:975.23px;top:1428.00px;white-space:nowrap;font:400 15.34px 'Liberation Sans', sans-serif;line-height:19px;color:#3f57a6;transform:scaleX(0.9680);transform-origin:0 0;">Privacy Policy</div><div style="position:absolute;left:975.25px;top:1460.90px;white-space:nowrap;font:400 15.34px 'Liberation Sans', sans-serif;line-height:19px;color:#3f57a6;transform:scaleX(0.9497);transform-origin:0 0;">Restricted Data Use</div><div style="position:absolute;left:975.21px;top:1494.80px;white-space:nowrap;font:400 15.34px 'Liberation Sans', sans-serif;line-height:19px;color:#3f57a6;transform:scaleX(0.9857);transform-origin:0 0;">Freedom of Information Act</div><div style="position:absolute;left:976.20px;top:1529.70px;white-space:nowrap;font:400 15.34px 'Liberation Sans', sans-serif;line-height:19px;color:#3f57a6;transform:scaleX(0.9701);transform-origin:0 0;">Accessibility</div><div style="position:absolute;left:1224.40px;top:1358.00px;white-space:nowrap;font:700 17.26px 'Liberation Sans', sans-serif;line-height:22px;color:#1b1b1b;transform:scaleX(0.9213);transform-origin:0 0;">Customer Service</div><div style="position:absolute;left:1223.38px;top:1393.90px;white-space:nowrap;font:400 15.34px 'Liberation Sans', sans-serif;line-height:19px;color:#3f57a6;transform:scaleX(1.0200);transform-origin:0 0;">Help</div><div style="position:absolute;left:1224.40px;top:1428.00px;white-space:nowrap;font:400 15.34px 'Liberation Sans', sans-serif;line-height:19px;color:#3f57a6;transform:scaleX(0.9516);transform-origin:0 0;">Check Entity Status</div><div style="position:absolute;left:1223.47px;top:1460.90px;white-space:nowrap;font:400 15.34px 'Liberation Sans', sans-serif;line-height:19px;color:#3f57a6;transform:scaleX(0.9345);transform-origin:0 0;">Federal Service Desk</div><div style="position:absolute;left:1223.46px;top:1495.50px;white-space:nowrap;font:400 15.34px 'Liberation Sans', sans-serif;line-height:19px;color:#3f57a6;transform:scaleX(0.9362);transform-origin:0 0;">External Resources</div><div style="position:absolute;left:1224.40px;top:1529.70px;white-space:nowrap;font:400 15.34px 'Liberation Sans', sans-serif;line-height:19px;color:#3f57a6;transform:scaleX(0.9633);transform-origin:0 0;">Contact</div><div style="position:absolute;left:553.50px;top:1577.00px;white-space:nowrap;font:700 9px 'Liberation Sans', sans-serif;line-height:11px;color:#235197;transform:scaleX(0.8571);transform-origin:0 0;">®</div><div style="position:absolute;left:484.14px;top:1605.00px;white-space:nowrap;font:400 33px 'Liberation Sans', sans-serif;line-height:41px;color:#fff;transform:scaleX(0.8606);transform-origin:0 0;-webkit-text-stroke:0.4px #fff">GS</div><div style="position:absolute;left:683.40px;top:1576.00px;white-space:nowrap;font:700 16.5px 'Liberation Mono', monospace;line-height:21px;color:#333;transform:scaleX(0.8616);transform-origin:0 0;">WARNING</div><div style="position:absolute;left:659.20px;top:1600.80px;white-space:nowrap;font:400 13.43px 'Liberation Sans', sans-serif;line-height:17px;color:#333;transform:scaleX(0.9507);transform-origin:0 0;">This is a U.S. General Services Administration Federal Government computer system that is</div><div style="position:absolute;left:1185.00px;top:1600.80px;white-space:nowrap;font:700 13.43px 'Liberation Sans', sans-serif;line-height:17px;color:#1b1b1b;transform:scaleX(0.8923);transform-origin:0 0;">&quot;FOR OFFICIAL USE ONLY.&quot;</div><div style="position:absolute;left:1350.00px;top:1600.80px;white-space:nowrap;font:400 13.43px 'Liberation Sans', sans-serif;line-height:17px;color:#333;transform:scaleX(0.9226);transform-origin:0 0;">This system is</div><div style="position:absolute;left:659.20px;top:1618.90px;white-space:nowrap;font:400 13.43px 'Liberation Sans', sans-serif;line-height:17px;color:#333;transform:scaleX(0.9966);transform-origin:0 0;">subject to monitoring. Individuals found performing unauthorized activities are subject to disciplinary action including criminal</div><div style="position:absolute;left:659.20px;top:1637.00px;white-space:nowrap;font:400 13.43px 'Liberation Sans', sans-serif;line-height:17px;color:#333;">prosecution.</div><div style="position:absolute;left:659.20px;top:1672.70px;white-space:nowrap;font:400 13.43px 'Liberation Sans', sans-serif;line-height:17px;color:#333;transform:scaleX(0.9784);transform-origin:0 0;">This system contains Controlled Unclassified Information (CUI). All individuals viewing, reproducing or disposing of this information are</div><div style="position:absolute;left:659.20px;top:1690.70px;white-space:nowrap;font:400 13.43px 'Liberation Sans', sans-serif;line-height:17px;color:#333;transform:scaleX(0.9361);transform-origin:0 0;">required to protect it in accordance with 32 CFR Part 2002 and GSA Order CIO 2103.2 CUI Policy.</div><div style="position:absolute;left:480.80px;top:1744.70px;white-space:nowrap;font:700 23px 'Liberation Sans', sans-serif;line-height:29px;color:#fff;transform:scaleX(0.8540);transform-origin:0 0;">SAM.gov</div><div style="position:absolute;left:480.50px;top:1777.40px;white-space:nowrap;font:700 21.1px 'Liberation Sans', sans-serif;line-height:26px;color:#fff;transform:scaleX(0.9813);transform-origin:0 0;">An official website of the U.S. General Services Administration</div>

</body></html>
